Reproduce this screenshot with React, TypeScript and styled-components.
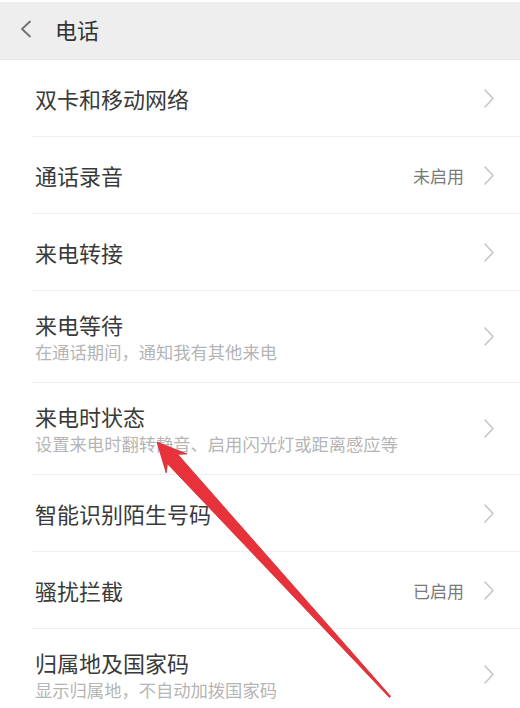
import * as React from "react";
import styled, { createGlobalStyle } from "styled-components";

type Item = {
  title: string;
  sub?: string;
  value?: string;
};

const items: Item[] = [
  { title: "双卡和移动网络" },
  { title: "通话录音", value: "未启用" },
  { title: "来电转接" },
  { title: "来电等待", sub: "在通话期间，通知我有其他来电" },
  { title: "来电时状态", sub: "设置来电时翻转静音、启用闪光灯或距离感应等" },
  { title: "智能识别陌生号码" },
  { title: "骚扰拦截", value: "已启用" },
  { title: "归属地及国家码", sub: "显示归属地，不自动加拨国家码" },
];

export default function App() {
  return (
    <Page>
      <GlobalStyle />
      <Header>
        <BackIcon />
        <HeaderTitle>电话</HeaderTitle>
      </Header>
      <List>
        {items.map(({ title, sub, value }) => (
          <Row key={title} $tall={!!sub}>
            <TextBlock>
              <Title>{title}</Title>
              {sub && <Sub>{sub}</Sub>}
            </TextBlock>
            <Trailing>
              {value && <Value>{value}</Value>}
              <ChevronRight />
            </Trailing>
          </Row>
        ))}
      </List>
      <Arrow />
    </Page>
  );
}

const GlobalStyle = createGlobalStyle`
  html, body {
    margin: 0;
    padding: 0;
    background: #ffffff;
  }
  body {
    font-family: "Noto Sans CJK SC", "Noto Sans", sans-serif;
  }
`;

const Page = styled.div`
  position: relative;
  width: 520px;
  height: 708px;
  overflow: hidden;
  background: #ffffff;
`;

const Header = styled.header`
  margin-top: 2px;
  height: 58px;
  background: #eeeeef;
  display: flex;
  align-items: center;
  padding: 0 0 3px 19px;
  gap: 22px;
  border-bottom: 1px solid #e6e6e6;
  box-sizing: border-box;
`;

const HeaderTitle = styled.h1`
  margin: 0;
  font-size: 22px;
  font-weight: 400;
  color: #333333;
  line-height: 1;
`;

const List = styled.ul`
  list-style: none;
  margin: 0;
  padding: 0;
`;

const Row = styled.li<{ $tall: boolean }>`
  margin-left: 32px;
  padding: 0 25px 0 3px;
  height: ${(p) => (p.$tall ? 92 : 77)}px;
  display: flex;
  align-items: center;
  justify-content: space-between;
  border-bottom: 1px solid #efefef;
  box-sizing: border-box;
`;

const TextBlock = styled.div`
  display: flex;
  flex-direction: column;
`;

const Title = styled.span`
  font-size: 22px;
  line-height: 30px;
  color: #3a3a3a;
`;

const Sub = styled.span`
  font-size: 17.3px;
  line-height: 24px;
  color: #b5b5b5;
  margin-top: 1px;
`;

const Trailing = styled.div`
  display: flex;
  align-items: center;
  gap: 19px;
`;

const Value = styled.span`
  font-size: 17px;
  color: #7a7a7a;
`;

function BackIcon() {
  return (
    <svg width="14" height="18" viewBox="0 0 14 18">
      <polyline
        points="11,1.5 3,9 11,16.5"
        fill="none"
        stroke="#6f6f6f"
        strokeWidth="1.8"
        strokeLinecap="round"
        strokeLinejoin="round"
      />
    </svg>
  );
}

function ChevronRight() {
  return (
    <svg width="12" height="21" viewBox="0 0 12 21">
      <polyline
        points="2,2 10,10.5 2,19"
        fill="none"
        stroke="#c6c6c6"
        strokeWidth="1.6"
        strokeLinecap="round"
        strokeLinejoin="round"
      />
    </svg>
  );
}

const Overlay = styled.svg`
  position: absolute;
  left: 0;
  top: 0;
  pointer-events: none;
`;

function Arrow() {
  // tip, wings and tapering shaft down to the tail
  const tip = [157, 442];
  const back = [0.675, 0.739];
  const perp = [0.739, -0.675];
  const pt = (a: number, p: number) =>
    `${(tip[0] + a * back[0] + p * perp[0]).toFixed(1)},${(
      tip[1] +
      a * back[1] +
      p * perp[1]
    ).toFixed(1)}`;
  const points = [
    pt(0, 0),
    pt(29, 14),
    pt(23, 7),
    pt(345, 1),
    pt(345, -0.6),
    pt(23, -7),
    pt(29, -14),
  ].join(" ");
  return (
    <Overlay width="520" height="708" viewBox="0 0 520 708">
      <defs>
        <filter id="soft" x="-10%" y="-10%" width="120%" height="120%">
          <feGaussianBlur stdDeviation="0.6" />
        </filter>
      </defs>
      <polygon
        points={points}
        fill="#e8333a"
        stroke="#d42a31"
        strokeWidth="0.8"
        strokeLinejoin="round"
        filter="url(#soft)"
      />
    </Overlay>
  );
}
